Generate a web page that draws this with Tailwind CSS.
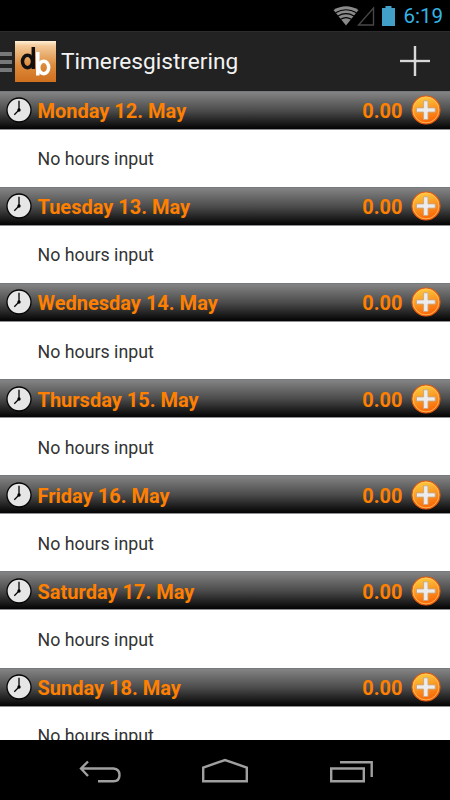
<!DOCTYPE html>
<html lang="en">

<head>
  <meta charset="UTF-8" />
  <meta name="viewport" content="width=device-width, initial-scale=1" />
  <title>Timeresgistrering</title>
  <script src="https://cdn.jsdelivr.net/npm/@tailwindcss/browser@4"></script>
</head>

<body class="bg-black font-['Roboto',sans-serif] flex flex-col w-[450px] h-[800px] overflow-hidden">
  <!-- Shared icons -->
  <svg class="absolute w-0 h-0">
    <defs>
      <linearGradient id="orb" x1="0" y1="0" x2="0.3" y2="1">
        <stop offset="0" stop-color="#ffd83c" />
        <stop offset="0.45" stop-color="#fba52a" />
        <stop offset="1" stop-color="#fb6a08" />
      </linearGradient>
      <linearGradient id="logo-bg" x1="0" y1="0" x2="0" y2="1">
        <stop offset="0" stop-color="#fff0d8" />
        <stop offset="0.12" stop-color="#f3c998" />
        <stop offset="0.6" stop-color="#dc8a3a" />
        <stop offset="1" stop-color="#d0701f" />
      </linearGradient>
    </defs>
    <symbol id="icon-clock" viewBox="0 0 26 26">
      <circle cx="13" cy="13" r="12" fill="#e6e6e6" stroke="#050505" stroke-width="1.3" />
      <path d="M13 3.7V13L8.3 17.7" fill="none" stroke="#000" stroke-width="1.3" />
      <circle cx="13" cy="13" r="1.7" fill="#000" />
    </symbol>
    <symbol id="icon-add" viewBox="0 0 30 30">
      <circle cx="15" cy="15" r="14" fill="url(#orb)" stroke="#e2560a" stroke-width="1.1" />
      <circle cx="15" cy="15" r="12.9" fill="none" stroke="#ffc56a" stroke-width="0.8" />
      <path d="M12.6 5.800h4.400v7.100h7.200v4.200h-7.200v7.400h-4.400v-7.400H5.500v-4.200h7.100z" fill="#ececec" stroke="#c9a683" stroke-width="0.9" />
    </symbol>
  </svg>

  <!-- Status bar -->
  <div class="h-[31px] shrink-0 flex items-center justify-end pr-[7px]">
    <svg class="w-[26px] h-5" viewBox="0 0 26 20">
      <path d="M0.5 4Q13 -3.500 25.500 4L13 19.500Z" fill="#8a8a8a" />
      <path d="M2.500 6.800Q13 .8 23.500 6.800M5 10Q13 5.300 21 10M7.600 13.200Q13 10 18.400 13.200" fill="none" stroke="#000" stroke-width="1.1" />
    </svg>
    <svg class="w-[18px] h-5 -ml-[2px]" viewBox="0 0 18 20">
      <path d="M16.500 2V19H1.500Z" fill="none" stroke="#484848" stroke-width="1.4" />
    </svg>
    <svg class="w-[13px] h-5 ml-[7px]" viewBox="0 0 13 20">
      <path d="M0 2h3.500V0h6v2H13v18H0z" fill="#429fc8" />
    </svg>
    <span class="ml-[8px] pt-[2px] text-[20.5px] leading-none text-[#33b5e5]">6:19</span>
  </div>

  <!-- Action bar -->
  <header class="h-[59.5px] shrink-0 bg-[#222222] border-t border-[#2c2c2c] flex items-center">
    <div class="w-3 flex flex-col gap-1 mr-[3px] pt-px">
      <div class="h-1 bg-[#77787a]"></div>
      <div class="h-1 bg-[#77787a]"></div>
      <div class="h-1 bg-[#77787a]"></div>
    </div>
    <svg class="w-[41px] h-[41px]" viewBox="0 0 41 41">
      <rect width="41" height="41" fill="url(#logo-bg)" />
      <g fill="none" stroke-width="3.500">
        <ellipse cx="12.500" cy="20.500" rx="5" ry="6.200" stroke="#111" />
        <path d="M18.300 6v22" stroke="#111" />
        <ellipse cx="28.700" cy="26.500" rx="5" ry="6.200" stroke="#fff" />
        <path d="M22.800 11v23.500" stroke="#fff" />
      </g>
    </svg>
    <h1 class="ml-[5px] pt-[3px] text-[22.65px] leading-none text-[#f3f3f3]">Timeresgistrering</h1>
    <svg class="w-8 h-8 ml-auto mr-[19px]" viewBox="0 0 32 32">
      <path d="M16 1v30M1 16h30" stroke="#0c0c0c" stroke-width="4" />
      <path d="M16 1v30M1 16h30" stroke="#d8d8d8" stroke-width="2.600" />
    </svg>
  </header>

  <!-- Week list, one block per day -->
  <main id="days" class="flex-1 min-h-0 overflow-hidden bg-white"></main>

  <!-- Navigation bar -->
  <nav class="h-[60px] shrink-0 bg-black">
    <svg class="w-full h-full" viewBox="0 0 450 60" fill="none" stroke="#a0a0a0" stroke-width="2.400">
      <path d="M81 28.500H113.500Q119.500 29 119.500 35Q119.500 41.300 113.500 41.300H98M88 21.500L81 28.500L88 36" />
      <path d="M203.200 41.300V27.500L225 20L246.800 27.500V41.300Z" />
      <path d="M331.200 28.500H363.800V41.300H331.200ZM340 22.300H371.700V37" />
    </svg>
  </nav>

  <script>
    const days = ['Monday 12. May', 'Tuesday 13. May', 'Wednesday 14. May', 'Thursday 15. May',
      'Friday 16. May', 'Saturday 17. May', 'Sunday 18. May'];

    document.getElementById('days').innerHTML = days.map(day => `
      <section class="h-[96.2px]">
        <div class="h-[39px] flex items-center pl-[6px] pr-[9px] border-t border-b border-t-[#777a7d] border-b-[#8d8f92] bg-linear-to-b/srgb from-[#848484] via-[#4c4c4c] to-[#030303] text-[#ff8000] font-bold text-[20px] leading-none">
          <svg class="w-[26px] h-[26px]"><use href="#icon-clock" /></svg>
          <h2 class="ml-[5.5px] pt-[2px]">${day}</h2>
          <span class="ml-auto mr-[8.5px] pt-[2px]">0.00</span>
          <svg class="w-[30px] h-[30px]"><use href="#icon-add" /></svg>
        </div>
        <p class="h-[57px] pl-[37.5px] pt-[3px] flex items-center text-[17.8px] text-[#333333]">No hours input</p>
      </section>`).join('');
  </script>
</body>

</html>
